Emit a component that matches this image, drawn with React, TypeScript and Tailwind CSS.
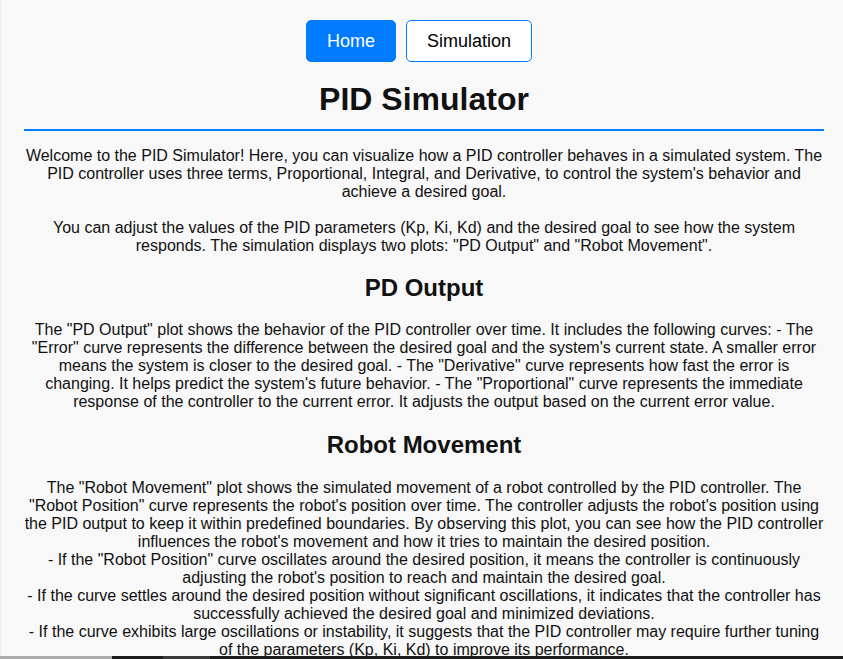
const NavButton = ({ label, active }: { label: string; active?: boolean }) => (
  <button
    className={
      active
        ? "h-[42px] px-5 rounded-[5px] border border-[#007bff] bg-[#007bff] text-white text-[18px]"
        : "h-[42px] px-5 rounded-[5px] border border-[#007bff] bg-white text-black text-[18px]"
    }
  >
    {label}
  </button>
);

const App = () => {
  return (
    <div
      className="min-h-screen bg-[#f8f8f8] text-[#111] shadow-[inset_3px_0_2px_-2px_rgba(0,0,0,0.06)]"
      style={{ fontFamily: '"Liberation Sans", Arial, sans-serif' }}
    >
      <div className="pl-[24px] pr-[19px] pt-[20px]">
        <nav className="flex justify-center gap-[10px] pr-[10px]">
          <NavButton label="Home" active />
          <NavButton label="Simulation" />
        </nav>

        <h1 className="mt-[19px] pb-[11px] border-b-2 border-[#007bff] text-center text-[32px] font-bold leading-[37px]">
          PID Simulator
        </h1>

        <section className="text-center text-[16px] leading-[18px]">
          <p className="mt-[16px]">
            Welcome to the PID Simulator! Here, you can visualize how a PID controller behaves in a simulated
            system. The PID controller uses three terms, Proportional, Integral, and Derivative, to control the
            system's behavior and achieve a desired goal.
          </p>
          <p className="mt-[18px]">
            You can adjust the values of the PID parameters (Kp, Ki, Kd) and the desired goal to see how the
            system responds. The simulation displays two plots: "PD Output" and "Robot Movement".
          </p>

          <h2 className="mt-[19px] text-[24px] font-bold leading-[28px]">PD Output</h2>
          <p className="mt-[19px]">
            The "PD Output" plot shows the behavior of the PID controller over time. It includes the following
            curves: - The "Error" curve represents the difference between the desired goal and the system's
            current state. A smaller error means the system is closer to the desired goal. - The "Derivative"
            curve represents how fast the error is changing. It helps predict the system's future behavior. - The
            "Proportional" curve represents the immediate response of the controller to the current error. It
            adjusts the output based on the current error value.
          </p>

          <h2 className="mt-[20px] text-[24px] font-bold leading-[28px]">Robot Movement</h2>
          <p className="mt-[20px]">
            The "Robot Movement" plot shows the simulated movement of a robot controlled by the PID controller.
            The "Robot Position" curve represents the robot's position over time. The controller adjusts the
            robot's position using the PID output to keep it within predefined boundaries. By observing this
            plot, you can see how the PID controller influences the robot's movement and how it tries to
            maintain the desired position.
            <br />- If the "Robot Position" curve oscillates around the desired position, it means the controller
            is continuously adjusting the robot's position to reach and maintain the desired goal.
            <br />- If the curve settles around the desired position without significant oscillations, it
            indicates that the controller has successfully achieved the desired goal and minimized deviations.
            <br />- If the curve exhibits large oscillations or instability, it suggests that the PID controller
            may require further tuning of the parameters (Kp, Ki, Kd) to improve its performance.
          </p>
        </section>
      </div>

      <div className="fixed bottom-0 left-0 right-0 h-[3px] flex">
        <div className="w-[112px] bg-[#ababab]" />
        <div className="w-[51px] bg-[#1c1c1c]" />
        <div className="w-[47px] bg-[#3a3a3a]" />
        <div className="flex-1 bg-[#1c1c1c]" />
      </div>
    </div>
  );
};

export default App;
